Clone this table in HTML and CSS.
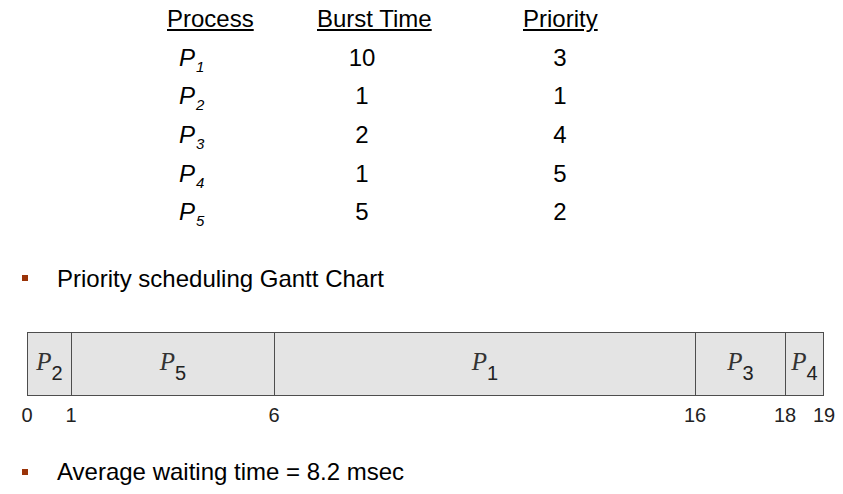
FILE: index.html
```html
<!DOCTYPE html>
<html>
<head>
<meta charset="utf-8">
<link rel="stylesheet" href="styles.css">
</head>
<body>
<div class="proc-table">
  <div class="th">Process</div>
  <div class="th">Burst Time</div>
  <div class="th">Priority</div>

  <div class="pname">P<sub>1</sub></div><div class="burst">10</div><div class="prio">3</div>
  <div class="pname">P<sub>2</sub></div><div class="burst">1</div><div class="prio">1</div>
  <div class="pname">P<sub>3</sub></div><div class="burst">2</div><div class="prio">4</div>
  <div class="pname">P<sub>4</sub></div><div class="burst">1</div><div class="prio">5</div>
  <div class="pname">P<sub>5</sub></div><div class="burst">5</div><div class="prio">2</div>
</div>

<div class="bullet first"><span class="mark"></span><span class="btext">Priority scheduling Gantt Chart</span></div>

<div class="gantt">
  <div class="cell c1"><span class="gp">P</span><span class="gs">2</span></div>
  <div class="cell c2"><span class="gp">P</span><span class="gs">5</span></div>
  <div class="cell c3"><span class="gp">P</span><span class="gs">1</span></div>
  <div class="cell c4"><span class="gp">P</span><span class="gs">3</span></div>
  <div class="cell c5"><span class="gp">P</span><span class="gs">4</span></div>
</div>
<div class="ticks">
  <div class="tick t1"><span>0</span></div>
  <div class="tick t2"><span>1</span></div>
  <div class="tick t3"><span>6</span></div>
  <div class="tick t4"><span>16</span></div>
  <div class="tick t5"><span>18</span></div>
  <div class="tick t6"><span>19</span></div>
</div>

<div class="bullet second"><span class="mark"></span><span class="btext">Average waiting time = 8.2 msec</span></div>
</body>
</html>
```
FILE: styles.css
```css
html, body {
  margin: 0;
  padding: 0;
  background: #fff;
}
body {
  width: 843px;
  height: 494px;
  overflow: hidden;
  font-family: "Liberation Sans", Arial, sans-serif;
  color: #000;
}
.proc-table {
  display: grid;
  grid-template-columns: 150px 206px 120px;
  grid-auto-rows: 38.7px;
  margin-left: 167px;
  font-size: 24px;
  line-height: 38.7px;
}
.th {
  text-decoration: underline;
  text-decoration-thickness: 2px;
  text-underline-offset: 2px;
}
.pname {
  font-style: italic;
  padding-left: 12px;
}
.pname sub {
  font-size: 15px;
  vertical-align: -6px;
  line-height: 0;
  margin-left: 1px;
}
.burst {
  width: 90px;
  text-align: center;
}
.prio {
  width: 74px;
  text-align: center;
}
.bullet {
  display: flex;
  align-items: flex-start;
  padding-left: 22px;
  font-size: 24px;
  line-height: 30px;
}
.bullet.first {
  margin-top: 31.5px;
}
.bullet.second {
  margin-top: 31.6px;
}
.mark {
  width: 6px;
  height: 6px;
  margin-top: 11.5px;
  background: #9a3308;
  flex: none;
}
.btext {
  margin-left: 29px;
}
.gantt {
  display: flex;
  box-sizing: border-box;
  width: 797px;
  height: 64px;
  margin-left: 27px;
  margin-top: 38.3px;
  border: 1px solid #4d4d4d;
  background: #e4e4e4;
}
.cell {
  box-sizing: border-box;
  height: 62px;
  padding-top: 15px;
  text-align: center;
  font-family: "Liberation Serif", "Times New Roman", serif;
  font-size: 25px;
  line-height: 28px;
  color: #333;
}
.cell + .cell {
  border-left: 1px solid #4d4d4d;
}
.c1 { width: 43px; }
.c2 { width: 203px; }
.c3 { width: 421px; }
.c4 { width: 90px; }
.c5 { width: 38px; }
.gp {
  font-style: italic;
}
.gs {
  font-family: "Liberation Sans", Arial, sans-serif;
  font-size: 20px;
  vertical-align: -10px;
  line-height: 0;
  color: #222;
}
.ticks {
  display: flex;
  margin-left: 27px;
  margin-top: 7.8px;
  font-size: 20px;
  line-height: 22px;
  height: 22px;
  color: #222;
}
.tick span {
  display: inline-block;
  transform: translateX(-50%);
}
.t1 { width: 44px; }
.t2 { width: 203px; }
.t3 { width: 421px; }
.t4 { width: 90px; }
.t5 { width: 39px; }
.t6 { width: 0; }
```
